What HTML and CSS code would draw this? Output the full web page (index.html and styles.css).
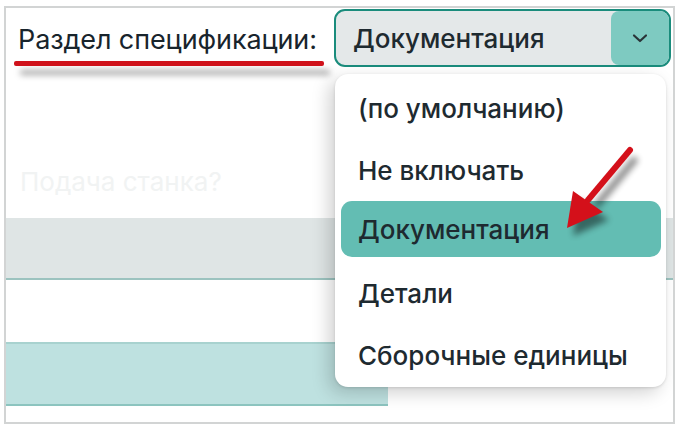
FILE: index.html
```html
<!DOCTYPE html>
<html lang="ru">
<head>
    <meta charset="UTF-8">
    <title>Раздел спецификации</title>
    <link rel="stylesheet" href="styles.css">
</head>
<body>
    <div class="frame">
        <div class="header">
            <div class="label">Раздел спецификации:</div>
            <div class="select">
                <span class="select-value">Документация</span>
                <span class="select-btn">
                    <svg width="18" height="11" viewBox="0 0 18 11"><path d="M3 2.5 L9 8 L15 2.5" fill="none" stroke="#2a3438" stroke-width="2.2" stroke-linecap="round" stroke-linejoin="round"/></svg>
                </span>
            </div>
        </div>

        <div class="table">
            <div class="row row-faded"><span>Подача станка?</span></div>
            <div class="row row-gray"></div>
            <div class="row row-white"></div>
            <div class="row row-teal"></div>
        </div>

        <ul class="menu">
            <li>(по умолчанию)</li>
            <li>Не включать</li>
            <li class="active">Документация</li>
            <li>Детали</li>
            <li>Сборочные единицы</li>
        </ul>

        <!-- pointer arrow drawn over the menu -->
        <svg class="pointer" width="90" height="100" viewBox="0 0 90 100">
            <defs>
                <filter id="blur" x="-50%" y="-50%" width="200%" height="200%">
                    <feGaussianBlur stdDeviation="3"/>
                </filter>
            </defs>
            <g transform="translate(6 8)" opacity="0.45" filter="url(#blur)">
                <line x1="68" y1="6" x2="28" y2="54" stroke="#000" stroke-width="7"/>
                <polygon points="5,84 11,47 41,68" fill="#000"/>
            </g>
            <line x1="68" y1="6" x2="26" y2="56" stroke="#d4101a" stroke-width="6" stroke-linecap="round"/>
            <polygon points="5,84 11,47 41,68" fill="#d4101a"/>
        </svg>
    </div>
</body>
</html>
```

FILE: styles.css
```css
* {
    margin: 0;
    padding: 0;
    box-sizing: border-box;
}

body {
    font-family: 'Inter', 'Noto Sans', sans-serif;
    background: #fff;
    color: #1e2a30;
}

.frame {
    position: relative;
    width: 671px;
    height: 418px;
    margin: 6px 0 0 4px;
    border: 2px solid #d2d4d4;
    overflow: hidden;
}

.header {
    display: flex;
    align-items: flex-start;
    padding: 1px 2px 0 8px;
    height: 142px;
}

.label {
    margin-top: 15px;
    font-size: 27px;
    line-height: 32px;
    padding: 0 4px;
    position: relative;
    letter-spacing: -0.1px;
    color: #18242c;
}

.label::after {
    content: '';
    position: absolute;
    left: 0;
    right: -3px;
    top: 37px;
    height: 5px;
    background: #d0121b;
    border-radius: 2px;
    box-shadow: 6px 9px 6px rgba(0, 0, 0, 0.35);
}

.select {
    margin-left: auto;
    width: 337px;
    height: 58px;
    display: flex;
    align-items: stretch;
    border: 2px solid #1a8c7c;
    border-radius: 11px;
    background: #e4e8e9;
    overflow: hidden;
}

.select-value {
    flex: 1;
    display: flex;
    align-items: center;
    padding-left: 17px;
    font-size: 26px;
    font-weight: 500;
}

.select-btn {
    width: 58px;
    display: flex;
    align-items: center;
    justify-content: center;
    background: #7ecac1;
    border-radius: 8px 0 0 8px;
}

.table {
    display: flex;
    flex-direction: column;
}

.row {
    height: 62px;
}

.row-faded {
    height: 68px;
    padding: 16px 0 0 14px;
    font-size: 26px;
    color: #f1f3f3;
}

.row-gray {
    background: #dfe5e5;
    border-bottom: 2px solid #9cc3bf;
}

.row-white {
    background: #fff;
}

.row-teal {
    height: 64px;
    margin-right: 285px;
    background: #bee1e0;
    border-top: 2px solid #a8d2cf;
    border-bottom: 2px solid #8cc4bf;
}

.menu {
    position: absolute;
    left: 329px;
    top: 66px;
    width: 331px;
    height: 313px;
    list-style: none;
    background: #fff;
    border-radius: 13px;
    padding: 3px 5px 0 6px;
    box-shadow: -6px 6px 18px rgba(0, 0, 0, 0.18), 0 1px 3px rgba(0, 0, 0, 0.12);
}

.menu li {
    height: 62px;
    display: flex;
    align-items: center;
    padding-left: 17px;
    font-size: 26px;
    font-weight: 500;
    border-radius: 11px;
}

.menu li.active {
    height: 56px;
    margin-bottom: 5px;
    background: #63bdb3;
}

.pointer {
    position: absolute;
    left: 556px;
    top: 136px;
}
```
